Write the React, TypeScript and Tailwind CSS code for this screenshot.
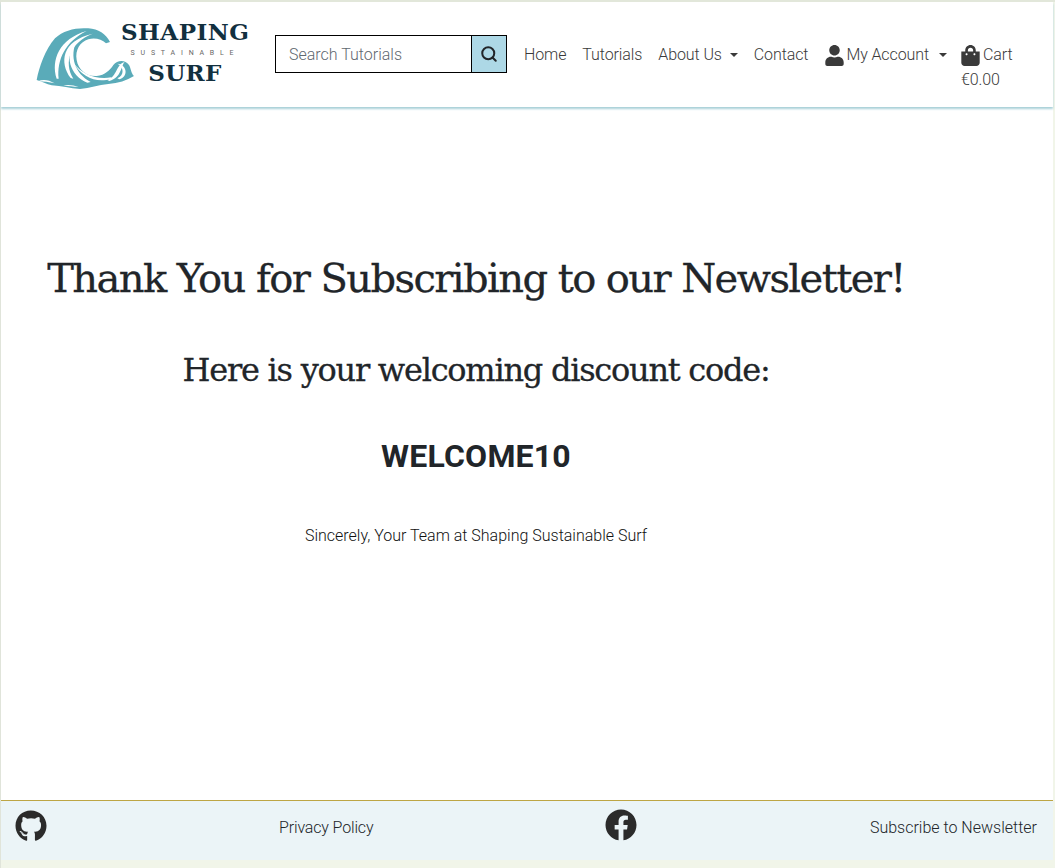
import { Search } from "lucide-react";
import { FaFacebook, FaGithub, FaShoppingBag, FaUser } from "react-icons/fa";

const slab = "font-['DejaVu_Serif',serif]";

// drawn in the coordinates of a 3x crop of the logo, hence the odd viewBox
function WaveLogo() {
  return (
    <svg viewBox="18 12 300 204" className="h-[68px] w-[100px] shrink-0">
      <path
        fill="#5aabb9"
        d="M20 180 C28 140 45 90 75 55 C100 30 140 22 175 25 C205 27 228 42 240 66 L228 70 C215 58 195 52 175 58 C150 66 135 90 140 120 C145 150 170 170 200 168 C225 166 240 150 250 135 C262 120 285 118 297 135 C303 145 303 160 312 168 C290 182 265 190 235 192 C205 195 180 205 150 207 C120 205 95 198 65 196 C50 192 35 185 20 180 Z"
      />
      <g fill="#ffffff">
        <path d="M80 176 C62 120 88 56 170 33 C106 64 80 120 86 176 Z" />
        <path d="M122 174 C88 128 94 62 188 41 C120 68 100 126 130 176 Z" />
        <path d="M172 188 C120 166 100 106 140 62 C118 108 134 160 182 186 Z" />
        <path d="M244 176 C200 190 156 172 130 128 C156 162 198 180 244 172 Z" />
        <path d="M268 178 C296 170 292 134 262 131 C282 140 284 166 262 175 Z" />
        <path d="M232 180 C262 170 258 132 284 126 C272 138 276 172 238 183 Z" />
        <path d="M24 184 C40 177 56 180 74 190 C56 186 42 184 24 184 Z" />
        <path d="M100 197 C116 193 130 196 146 201 C130 199 116 198 100 197 Z" />
      </g>
    </svg>
  );
}

function Caret({ className = "ml-2" }: { className?: string }) {
  return <span className={`inline-block border-x-[4px] border-t-[4px] border-x-transparent border-t-[#3a3a3a] align-middle ${className}`} />;
}

export default function App() {
  return (
    <div className="flex min-h-[868px] flex-col border-l border-t-2 border-l-[#e0e4da] border-t-[#e2e7da] bg-[#f1f5e9] pb-[8px] pr-[2px] font-['Roboto',sans-serif] font-light text-[#212529]">
      <header className="relative z-10 flex h-[105px] bg-white pl-[35px] shadow-[0_2px_2px_#a9d0d8]">
        <a className="mt-[22px] flex h-[68px] shrink-0">
          <WaveLogo />
          <div className={`-ml-[15px] w-[128px] text-center text-[#12303f] ${slab}`}>
            <div className="mt-[-5px] text-[23px] font-bold leading-[26px] tracking-[0.5px]">SHAPING</div>
            <div className="mt-[4px] font-['Roboto',sans-serif] text-[7px] font-normal leading-[8px] tracking-[5.8px] text-[#666]">SUSTAINABLE</div>
            <div className="mt-[3px] text-[23px] font-bold leading-[26px] tracking-[0.4px]">SURF</div>
          </div>
        </a>
        <form className="ml-[26px] mt-[33px] flex h-[38px] w-[232px] shrink-0 border border-black">
          <input
            placeholder="Search Tutorials"
            className="w-[195px] bg-white pl-[13px] pr-3 pt-[2px] text-base font-light text-[#495057] outline-none placeholder:text-[#5f6870]"
          />
          <button className="flex w-[35px] items-center justify-center border-l border-black bg-[#add8e6] text-[#212529]">
            <Search size={18} strokeWidth={2.7} />
          </button>
        </form>
        <nav className="ml-[9px] mt-[34px] flex items-start text-base tracking-[-0.1px] text-[#3a3a3a]">
          <a className="flex h-[38px] items-center px-2">Home</a>
          <a className="flex h-[38px] items-center px-2">Tutorials</a>
          <a className="flex h-[38px] items-center px-2">About Us<Caret /></a>
          <a className="flex h-[38px] items-center px-2">Contact</a>
          <a className="flex h-[38px] items-center pl-2 pr-[6px]"><FaUser className="mr-px text-[21px]" />My Account<Caret className="ml-[10px]" /></a>
          <a className="block px-2 pt-[8px] leading-6">
            <span className="-ml-px flex h-[22px] items-center"><FaShoppingBag className="mr-[2px] text-[21px]" />Cart</span>
            <span className="mt-[2px] block">€0.00</span>
          </a>
        </nav>
      </header>
      <main className="flex-1 bg-white">
        <div className="w-[950px] pt-[147px] text-center">
          <h1 className={`text-[40px] font-normal leading-[48px] tracking-[-1.57px] [-webkit-text-stroke:0.3px] ${slab}`}>Thank You for Subscribing to our Newsletter!</h1>
          <h2 className={`mt-[49px] text-[32px] font-normal leading-[38px] tracking-[-1.25px] [-webkit-text-stroke:0.3px] ${slab}`}>Here is your welcoming discount code:</h2>
          <h3 className="mt-[48px] text-[32px] font-bold leading-[38px] tracking-[0.2px]">WELCOME10</h3>
          <p className="mt-[49px] text-base leading-6 text-[#111]">Sincerely, Your Team at Shaping Sustainable Surf</p>
        </div>
      </main>
      <footer className="flex h-[60px] items-start border-t border-[#bda544] bg-[#ebf4f7] pl-[14px] pr-[16px] text-base">
        <FaGithub className="mt-[9px] text-[32px] text-[#2b2b2b]" />
        <a className="ml-[232px] mt-[15px] leading-6 tracking-[-0.15px]">Privacy Policy</a>
        <FaFacebook className="ml-[232px] mt-[8px] text-[32px] text-[#2b2b2b]" />
        <a className="ml-auto mt-[15px] leading-6">Subscribe to Newsletter</a>
      </footer>
    </div>
  );
}
